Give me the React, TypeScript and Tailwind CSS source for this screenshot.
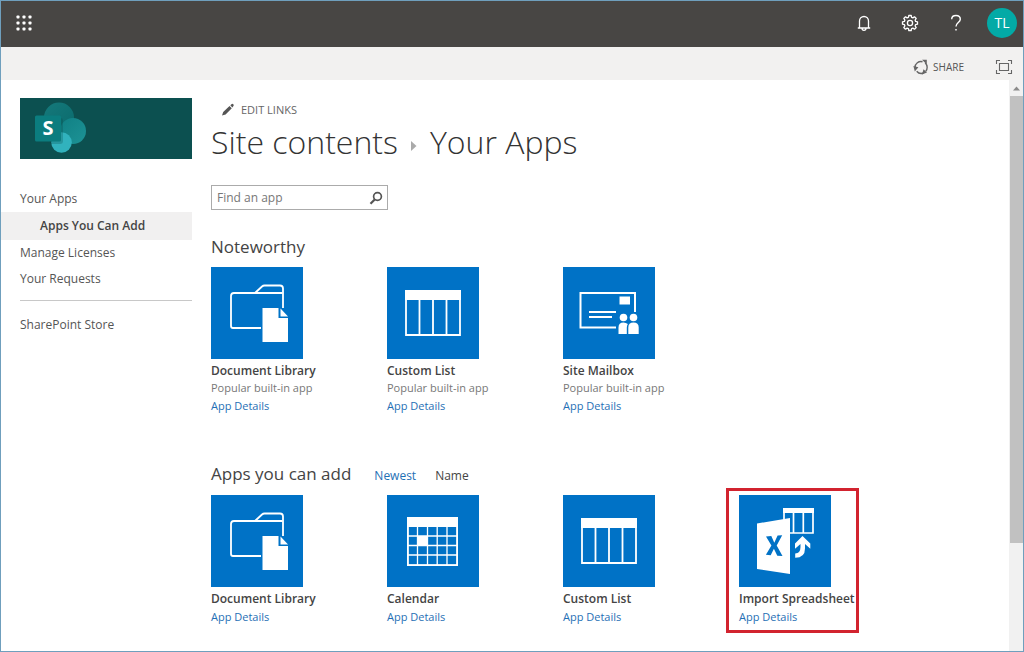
import type { ReactNode } from 'react';

type IconName = 'library' | 'list' | 'mailbox' | 'calendar' | 'import';

interface AppEntry {
  name: string;
  icon: IconName;
  note?: string;
  highlighted?: boolean;
}

const noteworthy: AppEntry[] = [
  { name: 'Document Library', icon: 'library', note: 'Popular built-in app' },
  { name: 'Custom List', icon: 'list', note: 'Popular built-in app' },
  { name: 'Site Mailbox', icon: 'mailbox', note: 'Popular built-in app' },
];

const available: AppEntry[] = [
  { name: 'Document Library', icon: 'library' },
  { name: 'Calendar', icon: 'calendar' },
  { name: 'Custom List', icon: 'list' },
  { name: 'Import Spreadsheet', icon: 'import', highlighted: true },
];

const icons: Record<IconName, ReactNode> = {
  library: (
    <>
      <g fill="none" stroke="#fff" strokeWidth="1.8">
        <path d="M50 61H22a2 2 0 0 1-2-2V29a3 3 0 0 1 3-3h48.500" />
        <path d="M44 26l7-6.500a4 4 0 0 1 2.500-1H69a3 3 0 0 1 3 3V41" />
      </g>
      <path d="M51.500 41H67.500v10H77v24H51.500z" fill="#fff" />
      <path d="M69.500 41.500l7.500 8h-7.500z" fill="#fff" />
    </>
  ),
  list: (
    <>
      <path d="M18 23h56v10H18z" fill="#fff" />
      <path
        d="M19 32v36h54V32M32.500 32v36M46 32v36M59.500 32v36"
        fill="none"
        stroke="#fff"
        strokeWidth="1.8"
      />
    </>
  ),
  mailbox: (
    <>
      <path d="M53 60.500H17.500V26H72v19" fill="none" stroke="#fff" strokeWidth="2" />
      <path d="M56.500 29.500H67v8H56.500z" fill="#fff" />
      <path d="M26 45h27M26 50h23" stroke="#fff" strokeWidth="1.8" />
      <circle cx="60.500" cy="50.500" r="3.800" fill="#fff" />
      <circle cx="70.500" cy="50.500" r="3.800" fill="#fff" />
      <path d="M55.500 67v-6.500q0-5 5-5 2.500 0 4.300 1.500-1 1.500-1 3.500V67z" fill="#fff" />
      <path d="M65.300 67v-6.500q0-5 5.200-5t5.200 5V67z" fill="#fff" />
    </>
  ),
  calendar: (
    <>
      <path d="M20 22h51v10H20z" fill="#fff" />
      <path
        d="M21 32v38h49V32M30.500 32v38M40.500 32v38M50.200 32v38M60 32v38M21 41h49M21 50.500h49M21 60h49"
        fill="none"
        stroke="#fff"
        strokeWidth="1.300"
      />
      <path d="M20.800 31v39.200h49.400V31" fill="none" stroke="#fff" strokeWidth="1.600" />
      <path d="M30.500 41h10v9.500h-10z" fill="#fff" />
    </>
  ),
  import: (
    <>
      <path d="M44 13h31v5H44z" fill="#fff" />
      <path
        d="M45 17v10M74 17v21H50M54.500 17v21M64.300 17v21"
        fill="none"
        stroke="#fff"
        strokeWidth="1.700"
      />
      <path d="M18 28.500l33-5.500v56l-33-5z" fill="#fff" />
      <path
        d="M27 41.500l5.300-.4 3 6.700 3.300-7.200 4.600-.4-5.500 10.300 5.800 10.600-5.200-.4-3.400-7-3.200 6.500-4.800-.4 5.500-9.300z"
        fill="#0072c6"
      />
      <path
        d="M63.500 41l7.800 7.500v5.200L66 49v4.500q0 9.300-9.800 9.300v-4.200q5.300-.4 5.300-6.600v-3L56 53.700v-5.200z"
        fill="#fff"
      />
    </>
  ),
};

function AppCard({ app }: { app: AppEntry }) {
  return (
    <li className="relative">
      <svg viewBox="0 0 92 92" className="block size-[92px] bg-[#0072c6]" aria-hidden="true">
        {icons[app.icon]}
      </svg>
      <h3 className="mt-1 text-[12px] leading-4 font-semibold text-[#444]">{app.name}</h3>
      {app.note && <p className="text-[11px] leading-[17px] text-[#777]">{app.note}</p>}
      <a href="#details" className="block text-[11px] leading-5 text-[#1f70b5]">
        App Details
      </a>
      {app.highlighted && (
        <span className="pointer-events-none absolute -top-[7px] -left-[13px] h-[145px] w-[133px] border-3 border-[#d2232f]" />
      )}
    </li>
  );
}

function AppGrid({ apps }: { apps: AppEntry[] }) {
  return (
    <ul className="grid grid-cols-[repeat(auto-fill,176px)]">
      {apps.map((app) => (
        <AppCard key={app.name} app={app} />
      ))}
    </ul>
  );
}

function SuiteBar() {
  return (
    <header className="flex h-[46px] items-center justify-between bg-[#484644] pr-[6px] pb-[2px] pl-[14px] text-white">
      <button aria-label="App launcher">
        <svg viewBox="0 0 18 18" className="size-[18px]" fill="#fff">
          {[3, 9, 15].map((y) =>
            [3, 9, 15].map((x) => (
              <rect key={`${x}-${y}`} x={x - 1.5} y={y - 1.5} width="3" height="3" rx="0.8" />
            )),
          )}
        </svg>
      </button>
      <div className="flex items-center">
        <button aria-label="Notifications" className="mr-[28px]">
          <svg viewBox="0 0 18 18" className="size-[18px]" fill="none" stroke="#fff" strokeWidth="1.300">
            <path d="M2.800 14h12.400M4.500 14V7a4.500 4.500 0 0 1 9 0v7M7 14.300a2 2 0 0 0 4 0" />
          </svg>
        </button>
        <button aria-label="Settings" className="mr-[28px]">
          <svg viewBox="0 0 18 18" className="size-[18px]" fill="none" stroke="#fff" strokeWidth="1.300">
            <path
              strokeLinejoin="round"
              d="M7.800 1.500h2.400l.4 1.900 1.300.5 1.600-1.100 1.700 1.700-1.100 1.600.5 1.300 1.900.4v2.400l-1.900.4-.5 1.300 1.100 1.600-1.700 1.700-1.600-1.100-1.300.5-.4 1.900H7.800l-.4-1.900-1.300-.5-1.600 1.100-1.700-1.700 1.100-1.600-.5-1.300-1.900-.4V7.800l1.900-.4.5-1.300-1.100-1.600 1.700-1.700 1.600 1.100 1.300-.5z"
            />
            <circle cx="9" cy="9" r="2.600" />
          </svg>
        </button>
        <button aria-label="Help" className="mr-[22px]">
          <svg viewBox="0 0 18 18" className="size-[18px]" fill="none" stroke="#fff" strokeWidth="1.400">
            <path d="M4.700 5.200C4.700 2.800 6.500 1.500 9 1.500s4.300 1.500 4.300 3.800c0 3.200-4.300 3.400-4.300 7.200" />
            <circle cx="9" cy="15.800" r="0.500" fill="#fff" strokeWidth="0.800" />
          </svg>
        </button>
        <button className="size-[30px] rounded-full bg-[#03aaa6] text-[14px] leading-[30px]">TL</button>
      </div>
    </header>
  );
}

function ActionBar() {
  return (
    <div className="flex h-[33px] items-center justify-end gap-[31px] bg-[#f2f1f0] pt-[6px] pr-[10px] text-[#555]">
      <button className="flex items-center gap-1 text-[10px] leading-4">
        <svg viewBox="0 0 16 16" className="size-4" fill="none" stroke="#666" strokeWidth="1.400">
          <path d="M2 8.500A6 6 0 0 1 9.500 2.700M12.200 4a6 6 0 0 1 .6 8.200M10.500 14a6 6 0 0 1-6.800-1.800" />
          <path d="M9 .8h4.800v4.800zM.4 7l5 1.200-3.600 4.200zM10.500 10.200l3.500 3.200-5 2z" fill="#666" stroke="none" />
        </svg>
        SHARE
      </button>
      <button aria-label="Focus on content">
        <svg viewBox="0 0 18 16" className="h-4 w-[18px]" fill="none" stroke="#666" strokeWidth="1.100">
          <path d="M1.500 5V1.500H5M13 1.500h3.500V5M16.500 11v3.500H13M5 14.500H1.500V11" />
          <path d="M4.500 4.500h9v7h-9z" />
        </svg>
      </button>
    </div>
  );
}

function SiteLogo() {
  return (
    <a href="#home" aria-label="Site home" className="ml-[19px] block bg-[#0c5050]">
      <svg viewBox="0 0 172 61" className="block w-full">
        <defs>
          <linearGradient id="top" x1="0" y1="0" x2="1" y2="1">
            <stop offset="0" stopColor="#15797b" />
            <stop offset="1" stopColor="#0a6a6c" />
          </linearGradient>
          <linearGradient id="mid" x1="0" y1="0" x2="1" y2="1">
            <stop offset="0" stopColor="#108084" />
            <stop offset="1" stopColor="#1d9396" />
          </linearGradient>
        </defs>
        <circle cx="39" cy="19.500" r="15" fill="url(#top)" />
        <circle cx="53" cy="33" r="13" fill="url(#mid)" />
        <circle cx="41.500" cy="44.500" r="10.300" fill="#31b2bd" />
        <path d="M17 20h23a3 3 0 0 1 3 3v20a3 3 0 0 1-3 3H31z" fill="#064444" opacity="0.250" />
        <rect x="15" y="17.500" width="26" height="26" rx="1.500" fill="#0b7d7f" />
        <text x="28" y="37" textAnchor="middle" fontSize="20" fontWeight="700" fill="#fff">
          S
        </text>
      </svg>
    </a>
  );
}

function SideNav() {
  return (
    <nav className="w-[191px] shrink-0 pt-[18px] text-[12px] leading-[26px] text-[#555]">
      <SiteLogo />
      <ul className="mt-[27px]">
        <li>
          <a href="#your-apps" className="block pl-[19px]">Your Apps</a>
        </li>
        <li>
          <a href="#add" className="block bg-[#f1f0f0] pl-[39px] leading-7 font-semibold text-[#444]">
            Apps You Can Add
          </a>
        </li>
        <li>
          <a href="#licenses" className="block pl-[19px]">Manage Licenses</a>
        </li>
        <li>
          <a href="#requests" className="block pl-[19px]">Your Requests</a>
        </li>
      </ul>
      <hr className="mt-2 mb-[11px] ml-[19px] border-[#c8c8c8]" />
      <a href="#store" className="block pl-[19px]">SharePoint Store</a>
    </nav>
  );
}

function ScrollTrack() {
  return (
    <div className="flex w-[14px] shrink-0 flex-col bg-[#f1f1f1]" aria-hidden="true">
      <svg viewBox="0 0 14 16" className="h-4 w-[14px]" fill="#8a8a8a">
        <path d="M4 10.500l3.500-4 3.500 4z" />
      </svg>
      <div className="ml-px h-[447px] bg-[#c1c1c1]" />
    </div>
  );
}

export default function App() {
  return (
    <div className="flex min-h-screen flex-col border border-[#6f9fbd] bg-white font-['Open_Sans','Noto_Sans',sans-serif]">
      <SuiteBar />
      <ActionBar />
      <div className="flex grow">
        <SideNav />
        <main className="min-w-0 grow pt-[22px] pl-[19px]">
          <button className="flex items-center gap-[6px] pl-[10px] text-[11px] leading-4 text-[#666]">
            <svg viewBox="0 0 14 14" className="size-[14px]" fill="#555">
              <path d="M1 12.500l1.200-3.600L8.500 3l2.300 2.300-6.200 6.300zM9.300 2.300l1.500-1.400q.8-.4 1.500.3t.3 1.500l-1.200 1.700z" />
            </svg>
            EDIT LINKS
          </button>
          <h1 className="mt-[2px] flex items-center text-[32px] leading-[44px] font-light text-[#333]">
            Site contents
            <svg viewBox="0 0 6 10" className="mx-[13px] mt-[8px] h-[10px] w-[6px]" fill="#aaa">
              <path d="M0 0l5.500 5L0 10z" />
            </svg>
            Your Apps
          </h1>
          <form className="mt-[21px] flex h-[25px] w-[177px] items-center border border-[#ababab] pr-1 pl-[5px]">
            <input
              type="search"
              aria-label="Find an app"
              placeholder="Find an app"
              className="min-w-0 grow text-[12px] leading-5 text-[#444] outline-none placeholder:text-[#777]"
            />
            <button type="button" aria-label="Search">
              <svg viewBox="0 0 14 14" className="size-[14px]" fill="none" stroke="#555" strokeWidth="1.700">
                <circle cx="8.500" cy="5.500" r="3.900" />
                <path d="M5.700 8.500L1.500 12.800" strokeWidth="2.200" />
              </svg>
            </button>
          </form>
          <section>
            <h2 className="mt-[25px] mb-2 text-[17px] leading-6 text-[#444]">Noteworthy</h2>
            <AppGrid apps={noteworthy} />
          </section>
          <section className="mt-11">
            <div className="mb-[5px] flex items-baseline text-[12px] leading-7">
              <h2 className="mr-[23px] text-[17px] text-[#444]">Apps you can add</h2>
              <a href="#newest" className="mr-[19px] text-[#1f70b5]">Newest</a>
              <a href="#name" className="text-[#444]">Name</a>
            </div>
            <AppGrid apps={available} />
          </section>
        </main>
        <ScrollTrack />
      </div>
    </div>
  );
}
